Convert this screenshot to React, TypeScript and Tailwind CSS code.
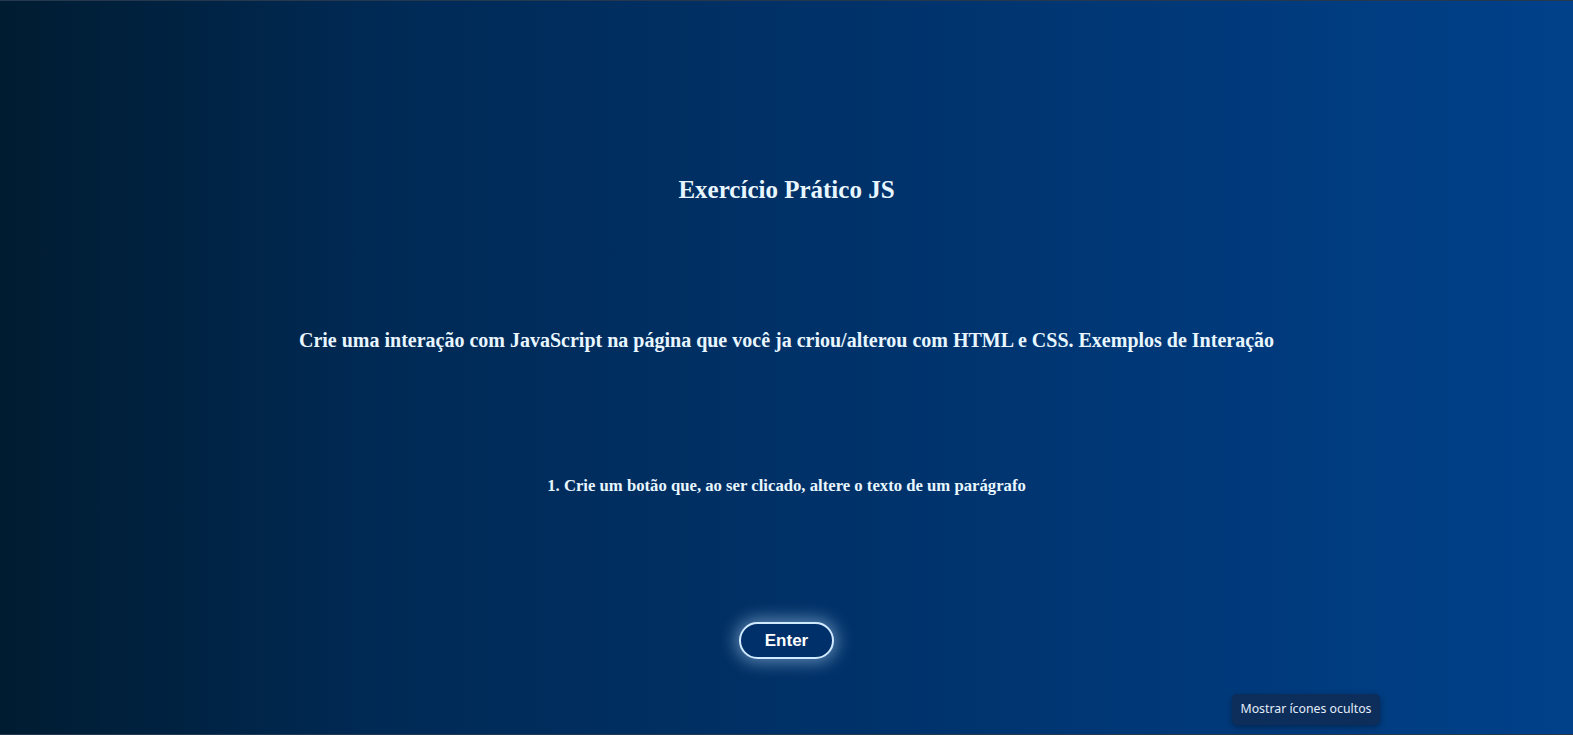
import React from "react";

export default function App() {
  return (
    <div className="relative w-[1573px] h-[735px] overflow-hidden border-t border-b border-[#26384d] bg-[linear-gradient(to_right,#001c31_0%,#002a56_25%,#00326a_55%,#003a7c_80%,#00418a_100%)]">
      <div className="flex flex-col items-center text-[#e8f6ff] font-['Liberation_Serif',serif] font-bold">
        <h1 className="mt-[174px] text-[25px] leading-[29px]">Exercício Prático JS</h1>
        <p className="mt-[121px] text-[20px] leading-[30px]">
          Crie uma interação com JavaScript na página que você ja criou/alterou com HTML e CSS. Exemplos de Interação
        </p>
        <p className="mt-[119px] text-[16.7px] leading-[24px]">
          1. Crie um botão que, ao ser clicado, altere o texto de um parágrafo
        </p>
        <button className="mt-[124px] w-[95px] h-[37px] rounded-full border-2 border-[#cfeaff] bg-[#00306a] text-white font-['Liberation_Sans',sans-serif] font-bold text-[17px] shadow-[0_0_16px_4px_rgba(190,225,255,0.45)]">
          Enter
        </button>
      </div>
      <div className="absolute left-[1232px] top-[693px] w-[148px] h-[31px] rounded-[5px] bg-[#0d2d5b] shadow-[0_2px_6px_rgba(0,0,0,0.35)] flex items-center justify-center text-[#e4edfa] text-[12.3px] font-['Noto_Sans',sans-serif]">
        Mostrar ícones ocultos
      </div>
    </div>
  );
}
